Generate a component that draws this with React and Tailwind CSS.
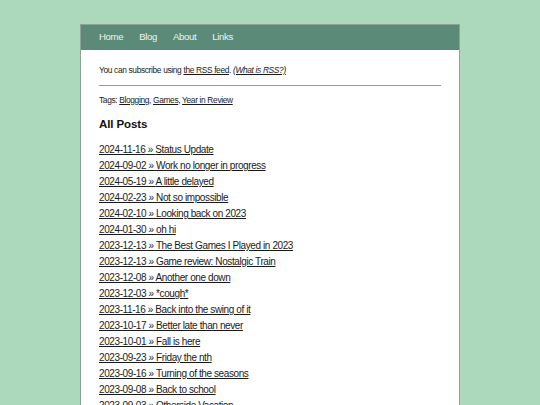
import React from "react";

const posts = [
  ["2024-11-16", "Status Update"],
  ["2024-09-02", "Work no longer in progress"],
  ["2024-05-19", "A little delayed"],
  ["2024-02-23", "Not so impossible"],
  ["2024-02-10", "Looking back on 2023"],
  ["2024-01-30", "oh hi"],
  ["2023-12-13", "The Best Games I Played in 2023"],
  ["2023-12-13", "Game review: Nostalgic Train"],
  ["2023-12-08", "Another one down"],
  ["2023-12-03", "*cough*"],
  ["2023-11-16", "Back into the swing of it"],
  ["2023-10-17", "Better late than never"],
  ["2023-10-01", "Fall is here"],
  ["2023-09-23", "Friday the nth"],
  ["2023-09-16", "Turning of the seasons"],
  ["2023-09-08", "Back to school"],
  ["2023-09-03", "Otherside Vacation"],
  ["2023-08-27", "Summer's end"],
];

export default function App() {
  return (
    <div
      className="min-h-screen bg-[#acd8bb] pt-[24px] overflow-hidden"
      style={{ fontFamily: '"Liberation Sans", Arial, sans-serif', height: 405 }}
    >
      <div className="mx-auto w-[380px] border border-[#8fa398] bg-white">
        <nav className="flex h-[25px] items-center gap-[16px] bg-[#5b8b78] px-[18px] text-[9.6px] tracking-[-0.35px] text-[#eef4f0]">
          <a>Home</a>
          <a>Blog</a>
          <a>About</a>
          <a>Links</a>
        </nav>
        <div className="px-[18px] pt-[14px] text-[#1a1a1a]">
          <p className="text-[8.4px] leading-[12px] tracking-[-0.35px]">
            You can subscribe using <a className="underline">the RSS feed</a>.{" "}
            <a className="italic underline">(What is RSS?)</a>
          </p>
          <hr className="mt-[9px] border-0 border-t border-[#999]" />
          <p className="mt-[8px] text-[8.4px] leading-[12px] tracking-[-0.35px]">
            Tags: <a className="underline">Blogging</a>, <a className="underline">Games</a>,{" "}
            <a className="underline">Year in Review</a>
          </p>
          <h2 className="mt-[11px] text-[11.5px] font-bold leading-[14px] tracking-[-0.1px] text-[#111]">All Posts</h2>
          <ul className="mt-[11px]">
            {posts.map(([d, t], i) => (
              <li key={i} className="text-[10px] leading-[16px] tracking-[-0.4px]">
                <a className="underline">
                  {d} » {t}
                </a>
              </li>
            ))}
          </ul>
        </div>
      </div>
    </div>
  );
}
